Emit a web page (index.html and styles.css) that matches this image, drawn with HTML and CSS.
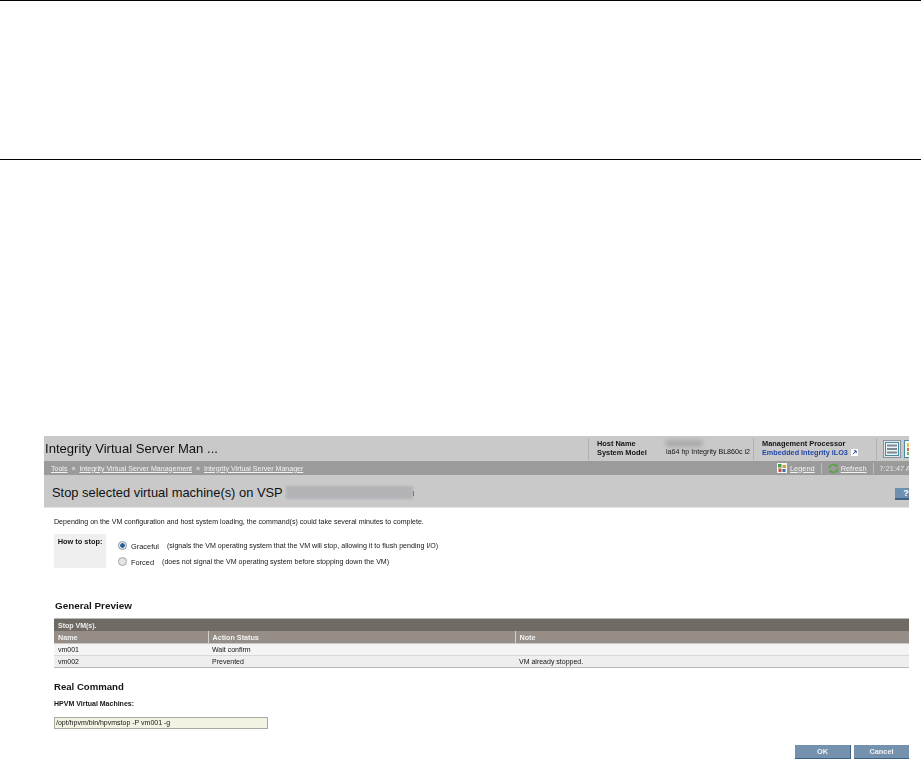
FILE: index.html
```html
<!DOCTYPE html>
<html lang="en">
<head>
<meta charset="utf-8">
<title>Stop selected virtual machine(s)</title>
<link rel="stylesheet" href="styles.css">
</head>
<body>
<div class="rule-band"></div>
<main class="shot">
  <header class="mast">
    <div class="app-title">Integrity Virtual Server Man ...</div>
    <div class="mast-info host">
      <div class="info-labels"><b>Host Name</b><b>System Model</b></div>
      <div class="info-values"><span class="redact host-redact"></span><span>ia64 hp Integrity BL860c i2</span></div>
    </div>
    <div class="mast-info mp">
      <b>Management Processor</b>
      <span class="mp-link">Embedded Integrity iLO3
        <svg class="ext" width="7" height="7" viewBox="0 0 7 7"><rect width="7" height="7" fill="#fff"/><path d="M2 5.2 5 2M2.8 1.8H5.2V4.2" stroke="#2a4f96" fill="none"/></svg>
      </span>
    </div>
    <div class="mast-icons">
      <svg class="mi" width="18" height="18" viewBox="0 0 18 18"><rect x=".5" y=".5" width="17" height="17" fill="#dfe6ea" stroke="#8a9499"/><rect x="2.500" y="2.500" width="13" height="13" fill="#eef2f3" stroke="#4b8aa5"/><path d="M4 5.500h10M4 9h10M4 12.500h10" stroke="#7b8b93" stroke-width="2"/></svg>
      <svg class="mi" width="18" height="18" viewBox="0 0 18 18"><rect x=".5" y=".5" width="17" height="17" fill="#f3f6f7" stroke="#4b8aa5"/><rect x="3" y="3" width="5" height="4" fill="#e8c544"/><rect x="3" y="8" width="5" height="3" fill="#d8694d"/><rect x="3" y="12" width="5" height="3" fill="#78b06a"/></svg>
    </div>
  </header>
  <nav class="crumbs">
    <div class="trail"><a>Tools</a><i>»</i><a>Integrity Virtual Server Management</a><i>»</i><a>Integrity Virtual Server Manager</a></div>
    <div class="tools">
      <svg class="ti" width="10" height="10" viewBox="0 0 10 10"><rect width="10" height="10" fill="#f4f4f0"/><rect x="1" y="1" width="3.500" height="3.500" fill="#4a9a52"/><rect x="5.500" y="2" width="3.500" height="3" fill="#d8a23a"/><rect x="1.500" y="5.500" width="3" height="3.500" fill="#c9503d"/><rect x="5.500" y="6" width="3" height="3" fill="#3f6fa8"/></svg>
      <a>Legend</a><span class="sep"></span>
      <svg class="ti" width="11" height="11" viewBox="0 0 11 11"><path d="M1.500 5.500A4 4 0 0 1 8.500 3M9.500 5.500A4 4 0 0 1 2.500 8" fill="none" stroke="#5fa34c" stroke-width="2"/><path d="M9.800 .8V4H6.700ZM1.200 10.200V7H4.300Z" fill="#5fa34c"/></svg>
      <a class="refresh">Refresh</a><span class="sep"></span>
      <span class="clock">7:21:47 AM</span>
    </div>
  </nav>
  <section class="page-head">
    <h1>Stop selected virtual machine(s) on VSP</h1><span class="redact vsp-redact"></span><span class="tick"></span>
    <span class="help">?</span>
  </section>
  <section class="body">
    <p class="intro">Depending on the VM configuration and host system loading, the command(s) could take several minutes to complete.</p>
    <div class="stop-form">
      <div class="stop-label">How to stop:</div>
      <div class="stop-options">
        <label class="opt"><span class="radio on"></span><span class="opt-name">Graceful</span><span>(signals the VM operating system that the VM will stop, allowing it to flush pending I/O)</span></label>
        <label class="opt"><span class="radio"></span><span class="opt-name">Forced</span><span>(does not signal the VM operating system before stopping down the VM)</span></label>
      </div>
    </div>
    <h2 class="preview-title">General Preview</h2>
    <table class="grid">
      <colgroup><col class="c1"><col class="c2"><col></colgroup>
      <thead>
        <tr class="cap"><th colspan="3">Stop VM(s).</th></tr>
        <tr class="cols"><th>Name</th><th>Action Status</th><th>Note</th></tr>
      </thead>
      <tbody>
        <tr class="r1"><td>vm001</td><td>Wait confirm</td><td></td></tr>
        <tr class="r2"><td>vm002</td><td>Prevented</td><td>VM already stopped.</td></tr>
      </tbody>
    </table>
    <h2 class="cmd-title">Real Command</h2>
    <h3 class="cmd-sub">HPVM Virtual Machines:</h3>
    <div class="cmd-box">/opt/hpvm/bin/hpvmstop -P vm001 -g</div>
    <div class="actions"><button class="btn ok">OK</button><button class="btn cancel">Cancel</button></div>
  </section>
</main>
</body>
</html>
```
FILE: styles.css
```css
html, body { margin: 0; padding: 0; background: #fff; }
body { font-family: "Liberation Sans", Arial, sans-serif; height: 771px; overflow: hidden; }
.rule-band { height: 158px; border-top: 1px solid #000; border-bottom: 1px solid #000; }
.shot { margin: 276px 0 0 44px; width: 865px; height: 335px; overflow: hidden; color: #151515; filter: blur(.4px); }
.mast { height: 25px; background: #c9c9c9; display: flex; align-items: center; }
.app-title { font-size: 13.100px; color: #111; margin-left: 1px; width: 543px; flex: none; white-space: nowrap; }
.mast-info { font-size: 7.400px; height: 22px; border-left: 1px solid #b0b0b0; display: flex; line-height: 9.500px; flex: none; }
.host { width: 165px; padding-left: 8px; box-sizing: border-box; }
.info-labels { display: flex; flex-direction: column; width: 69px; padding-top: 1px; }
.info-values { display: flex; flex-direction: column; padding-top: 1px; white-space: nowrap; font-size: 7.100px; }
.redact { background: #a9a9a9; filter: blur(2px); display: inline-block; }
.host-redact { width: 36px; height: 7px; margin: 1px 0 1px 0; }
.mp { width: 123px; padding-left: 8px; box-sizing: border-box; flex-direction: column; padding-top: 1px; }
.mp-link { color: #2347a8; font-weight: bold; white-space: nowrap; font-size: 7.250px; }
.ext { vertical-align: -1px; margin-left: 1px; }
.mast-icons { height: 22px; border-left: 1px solid #b0b0b0; padding-left: 6px; display: flex; align-items: center; gap: 3px; flex: none; }
.mi { flex: none; }
.crumbs { height: 14px; background: #9b9b9b; display: flex; align-items: center; justify-content: space-between; font-size: 7.050px; color: #f2f2f2; white-space: nowrap; }
.crumbs a { text-decoration: underline; }
.trail { margin-left: 7px; display: flex; }
.trail i { font-style: normal; margin: 0 4px; }
.tools { display: flex; align-items: center; gap: 3px; width: 132px; flex: none; font-size: 7.400px; }
.ti, .tools a, .clock { flex: none; }
.refresh { margin-left: -1px; }
.sep { width: 1px; height: 11px; background: #bdbdbd; margin: 0 3px; flex: none; }
.clock { color: #e6e6e6; }
.page-head { height: 32px; background: #c9c9c9; border-bottom: 1px solid #e2e2e2; display: flex; align-items: center; position: relative; }
.page-head h1 { margin: 3px 0 0 8px; font-size: 12.900px; font-weight: normal; color: #111; white-space: nowrap; }
.vsp-redact { width: 127px; height: 13px; margin: 3px 0 0 3px; background: #b2b2b7; filter: blur(1px); }
.tick { width: 1px; height: 5px; background: #5a5a60; margin-top: 5px; }
.help { position: absolute; right: -8px; top: 13px; width: 22px; height: 10px; background: #6e8fae; border-bottom: 2px solid #3f6186; color: #fff; font: bold 9px/11px "Liberation Sans", sans-serif; text-align: center; }
.body { background: #fff; padding-top: 9px; }
.intro { margin: 0 0 0 10px; font-size: 7.070px; line-height: 9px; }
.stop-form { margin: 8px 0 0 10px; display: flex; height: 34px; }
.stop-label { width: 52px; background: #efefef; font-size: 7.400px; font-weight: bold; text-align: center; padding-top: 3px; box-sizing: border-box; }
.stop-options { margin-left: 12px; padding-top: 4px; font-size: 7.100px; }
.opt { display: flex; align-items: center; height: 16px; white-space: nowrap; gap: 8px; }
.opt-name { font-size: 7.400px; margin-left: -4px; }
.radio { width: 7px; height: 7px; border-radius: 50%; border: 1px solid #a5a5a5; background: #e4e4e4; flex: none; margin-bottom: 2px; }
.radio.on { background: radial-gradient(circle, #2a5c94 0 2px, #e4e9ee 2.500px); border-color: #8896a4; }
h2 { margin: 0; font-size: 9.300px; font-weight: bold; color: #151515; }
.preview-title { margin: 33px 0 0 11px; line-height: 10px; font-size: 9.900px; }
.grid { margin-top: 7px; margin-left: 10px; width: 855px; border-collapse: collapse; table-layout: fixed; font-size: 7px; border-top: 1px solid #b8b8b8; border-bottom: 1px solid #b8b8b8; }
.grid .c1 { width: 154px; }
.grid .c2 { width: 307px; }
.grid th, .grid td { padding: 0 0 0 4px; text-align: left; white-space: nowrap; }
.cap th { height: 12px; background: #6f6a63; color: #eee; font-weight: bold; }
.cols th { height: 12px; background: #958d86; color: #f2f2f2; border-left: 1px solid #d4d0cc; border-bottom: 1px solid #c8c8c8; font-size: 7.200px; }
.cols th:first-child { border-left: 0; }
.r1 td { height: 11px; background: #f4f4f4; border-bottom: 1px solid #d8d8d8; }
.r2 td { height: 11px; background: #eeeeee; }
.cmd-title { margin: 13px 0 0 10px; font-size: 9.600px; line-height: 11px; }
.cmd-sub { margin: 7px 0 0 10px; font-size: 7px; line-height: 9px; }
.cmd-box { margin: 9px 0 0 10px; width: 214px; height: 12px; box-sizing: border-box; background: #f3f3e4; border: 1px solid #a9a9a0; font-size: 7px; line-height: 10px; padding-left: 1px; }
.actions { margin-top: 16px; display: flex; justify-content: flex-end; gap: 3px; }
.btn { height: 14px; padding: 0; border: 0; border-right: 1px solid #3c6288; border-bottom: 1px solid #3c6288; background: #7491ad; color: #f2f2f2; font: bold 7.400px "Liberation Sans", sans-serif; }
.ok { width: 56px; }
.cancel { width: 55px; border-right: 0; }
```
